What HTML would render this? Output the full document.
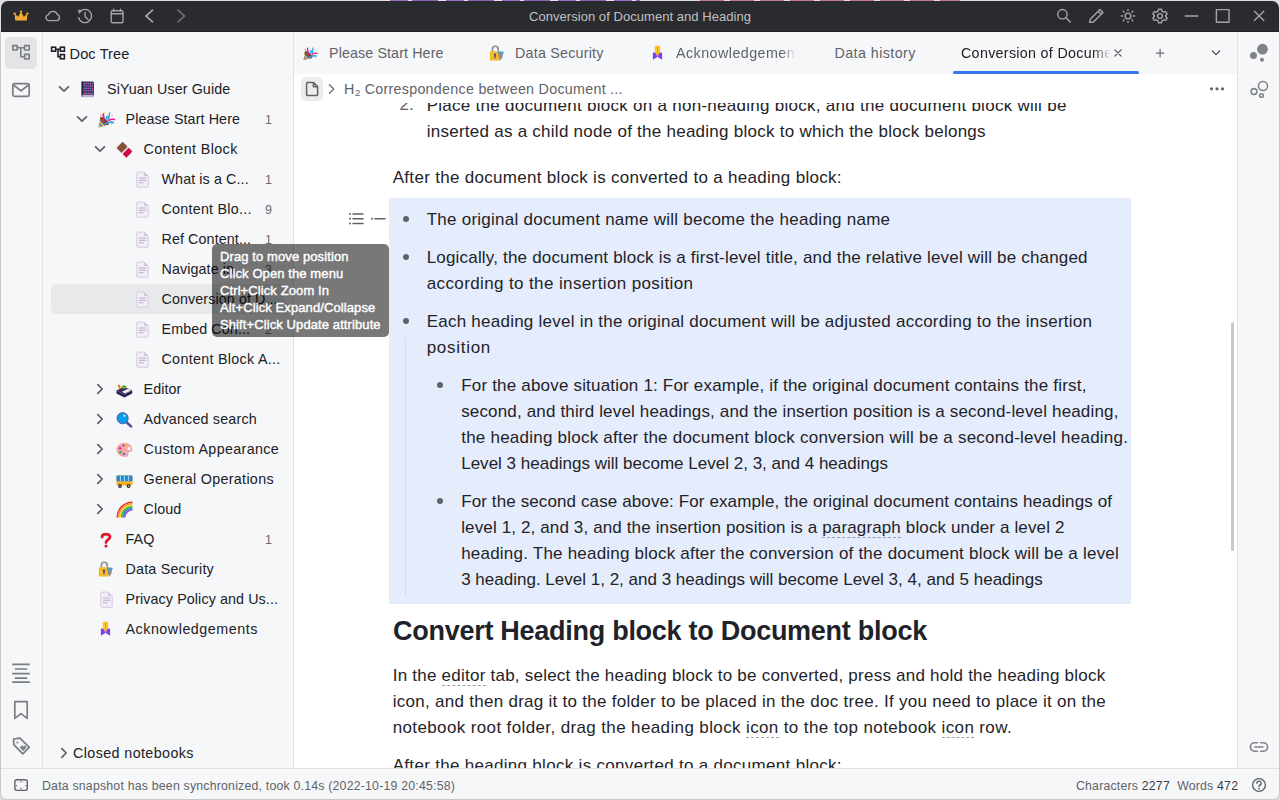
<!DOCTYPE html>
<html><head><meta charset="utf-8">
<style>
*{box-sizing:border-box;margin:0;padding:0}
html,body{width:1280px;height:800px;overflow:hidden;background:#dedede;font-family:"Liberation Sans",sans-serif;position:relative}
.a{position:absolute}
svg{position:absolute;overflow:visible}
#title{position:absolute;left:1px;top:1px;width:1278px;height:31px;background:#2a2b2f;border-radius:7px 7px 0 0;border-bottom:1px solid #1f2023}
#body{position:absolute;left:0;top:32px;width:1280px;height:768px;background:#c8c8c8;border-radius:0 0 7px 7px}
#dock{position:absolute;left:1px;top:32px;width:42px;height:736px;border-right:1px solid #e1e2e4;background:#f6f7f9}
#side{position:absolute;left:43px;top:32px;width:251px;height:736px;border-right:1px solid #e1e2e4;background:#f6f7f9}
#editor{position:absolute;left:294px;top:32px;width:943px;height:736px;background:#fff;overflow:hidden}
#tabs{position:absolute;left:294px;top:32px;width:943px;height:42px;background:#f6f7f9}
#rdock{position:absolute;left:1237px;top:32px;width:42px;height:736px;border-left:1px solid #e1e2e4;background:#f6f7f9}
#status{position:absolute;left:1px;top:768px;width:1278px;height:31px;border-top:1px solid #e1e2e4;background:#f6f7f9;border-radius:0 0 6px 6px}
.row{position:absolute;height:30px;line-height:30px;font-size:14.3px;color:#202124;white-space:nowrap;letter-spacing:.1px}
.cnt{position:absolute;height:30px;line-height:30px;font-size:12.5px;color:#6b6e73;white-space:nowrap;text-align:right;width:20px;left:252px}
.tab{position:absolute;top:32px;height:42px;line-height:42px;font-size:14.3px;color:#5f6368;white-space:nowrap;letter-spacing:.1px}
.p{position:absolute;white-space:pre;font-size:17px;color:#1f2329;line-height:26px}
.h{font-size:27px;font-weight:700;line-height:40px;color:#1f2329}
.u{border-bottom:1px dashed #9aa0a6}
.fade{-webkit-mask-image:linear-gradient(to right,#000 88%,transparent 100%)}
.st{stroke:#5f6368;fill:none;stroke-width:1.5;stroke-linecap:round;stroke-linejoin:round}
.tb{stroke:#a3a5a8;fill:none;stroke-width:1.4;stroke-linecap:round;stroke-linejoin:round}
.dk{stroke:#7a7d82;fill:none;stroke-width:1.7;stroke-linejoin:round}
.chev{stroke:#5f6368;fill:none;stroke-width:1.5;stroke-linecap:round;stroke-linejoin:round}
#tip{position:absolute;left:212px;top:244px;width:177px;height:93px;background:rgba(0,0,0,.53);border-radius:5px}
.tl{position:absolute;left:220px;font-size:13px;color:#fff;white-space:nowrap;line-height:17px;letter-spacing:.1px;-webkit-text-stroke:.4px #fff}
</style></head><body>
<div id="body"></div>
<div id="title"></div>
<div class="a" style="left:390px;top:0;width:250px;height:1px;background:repeating-linear-gradient(90deg,#9a6cc4 0 18px,#e4dcea 18px 22px,#8f62b8 22px 48px,#e6e0ea 48px 56px)"></div>
<div class="a" style="left:700px;top:0;width:260px;height:1px;background:repeating-linear-gradient(90deg,#c0779a 0 24px,#e8dde3 24px 30px)"></div>
<!-- titlebar icons -->
<svg width="1280" height="32" style="left:0;top:0">
  <path d="M15.2 20.6 L14.6 13.8 L18.2 16.8 L21 11.8 L23.8 16.8 L27.4 13.8 L26.8 20.6 Z" fill="#f3a930"/>
  <circle cx="14.6" cy="13.6" r="1.2" fill="#f3a930"/><circle cx="21" cy="11.6" r="1.2" fill="#f3a930"/><circle cx="27.4" cy="13.6" r="1.2" fill="#f3a930"/>
  <path class="tb" d="M49.5 20.6 H56.5 A3.2 3.2 0 0 0 57.3 14.4 A4.6 4.6 0 0 0 48.6 14.6 A3 3 0 0 0 49.5 20.6 Z"/>
  <path class="tb" d="M79.6 12.2 A6.6 6.6 0 1 1 78.6 17.6"/>
  <path d="M78 9.6 L82.4 10.6 L78.8 14 Z" fill="#a3a5a8"/>
  <path class="tb" d="M85 12.4 V16.4 L88 19.2"/>
  <rect class="tb" x="111.2" y="10.8" width="11.8" height="12" rx="1.4"/>
  <path class="tb" d="M111.2 13.8 H123 M113.6 9.2 V11 M120.6 9.2 V11"/>
  <path d="M153 9.6 L146 16 L153 22.4" stroke="#a3a5a8" stroke-width="1.7" fill="none"/>
  <path d="M177.5 9.6 L184.5 16 L177.5 22.4" stroke="#6a6c70" stroke-width="1.7" fill="none"/>
  <text x="640" y="20.5" text-anchor="middle" font-family="Liberation Sans" font-size="13" fill="#bfc0c3" letter-spacing=".05">Conversion of Document and Heading</text>
  <circle class="tb" cx="1062.4" cy="14.2" r="4.7"/><path class="tb" d="M1065.8 17.6 L1070.2 22"/>
  <path class="tb" d="M1089.6 22.4 L1090.4 19 L1100 9.4 L1103 12.4 L1093.4 22 Z M1098.2 11.2 L1101.2 14.2"/>
  <circle class="tb" cx="1128" cy="16" r="2.9"/>
  <path class="tb" d="M1128 9.4V10.6M1128 21.4V22.6M1121.4 16H1122.6M1133.4 16H1134.6M1123.3 11.3L1124.1 12.1M1131.9 19.9L1132.7 20.7M1123.3 20.7L1124.1 19.9M1131.9 12.1L1132.7 11.3"/>
  <path class="tb" d="M1158.6 9.2 H1161.4 L1162 11.2 L1163.8 12.2 L1165.8 11.6 L1167.2 14 L1165.6 15.4 V16.6 L1167.2 18 L1165.8 20.4 L1163.8 19.8 L1162 20.8 L1161.4 22.8 H1158.6 L1158 20.8 L1156.2 19.8 L1154.2 20.4 L1152.8 18 L1154.4 16.6 V15.4 L1152.8 14 L1154.2 11.6 L1156.2 12.2 L1158 11.2 Z"/>
  <circle class="tb" cx="1160" cy="16" r="2.4"/>
  <path class="tb" d="M1185.2 16 H1197.8"/>
  <rect class="tb" x="1216.4" y="9.6" width="12.6" height="12.6"/>
  <path class="tb" d="M1254.4 11.2 L1263.8 20.6 M1263.8 11.2 L1254.4 20.6"/>
</svg>

<div id="dock"></div>
<div class="a" style="left:5px;top:37px;width:32px;height:32px;background:#e3e4e6;border-radius:5px"></div>
<svg width="42" height="740" style="left:0;top:32px">
  <g class="dk" style="stroke-width:1.6">
    <rect x="12.8" y="13.6" width="4.4" height="4.4"/>
    <rect x="24.6" y="13.6" width="4.6" height="4.4"/>
    <rect x="24.6" y="22.4" width="4.6" height="4.6"/>
    <path d="M17.2 15.8 H24.6 M20.8 15.8 V24.7 H24.6"/>
  </g>
  <rect class="dk" x="12.8" y="51.6" width="16.4" height="12.8" rx="1.6"/>
  <path class="dk" d="M13.4 53 L21 58.8 L28.6 53"/>
  <path class="dk" d="M12.2 632.4 H29.8 M14.8 637 H27.2 M12.2 641.6 H29.8 M14.8 646.2 H27.2 M12.2 650.2 H29.8"/>
  <path class="dk" d="M14.8 669.6 H27.2 V686.4 L21 681.6 L14.8 686.4 Z"/>
  <path class="dk" d="M13.6 707 L13.8 712.6 L22.8 721.8 L29.2 715.4 L20 706.2 Z"/>
  <circle cx="17.4" cy="710.6" r="1" fill="#808388"/>
  <path d="M20.4 716.4 L23.2 719 L26 716.2 A1.5 1.5 0 0 0 23.2 714.4 A1.5 1.5 0 0 0 20.4 716.4 Z" fill="#808388"/>
</svg>

<div id="side"></div>
<svg style="left:50px;top:46px" width="16" height="14"><g stroke="#202124" stroke-width="1.6" fill="none"><rect x="1.6" y="1.2" width="4" height="4"/><rect x="10.4" y="1.2" width="4" height="4"/><rect x="10.4" y="8.6" width="4" height="4.2"/><path d="M5.6 3.2 H10.4 M8 3.2 V10.7 H10.4"/></g></svg>
<div class="row" style="left:69.5px;top:38.5px;font-size:14.6px">Doc Tree</div>
<div class="a" style="left:51px;top:284px;width:234px;height:30px;background:#e8e9eb;border-radius:5px"></div>
<svg style="left:58px;top:84.5px" width="12" height="8"><path d="M1.6 1.8 L6 6.2 L10.4 1.8" stroke="#5f6368" stroke-width="1.75" fill="none" stroke-linecap="round" stroke-linejoin="round"/></svg>
<svg style="left:81px;top:80.5px" width="14" height="17" viewBox="0 0 14 17" ><rect x="0.6" y="0.4" width="12.4" height="15.4" rx="1.2" fill="#4a3264"/><rect x="0.6" y="0.4" width="1.4" height="15.4" fill="#2c1d40"/><rect x="1.2" y="13.8" width="11.6" height="2.4" rx=".8" fill="#bfaed0"/><rect x="2.6" y="2.0" width="1.3" height="1.2" fill="#8e8aa0"/><rect x="4.6" y="2.0" width="1.3" height="1.2" fill="#e8489a"/><rect x="6.6" y="2.0" width="1.3" height="1.2" fill="#4f86f0"/><rect x="8.8" y="2.0" width="1.3" height="1.2" fill="#e8489a"/><rect x="10.8" y="2.0" width="1.3" height="1.2" fill="#4f86f0"/><rect x="2.6" y="4.3" width="1.3" height="1.2" fill="#4f86f0"/><rect x="4.6" y="4.3" width="1.3" height="1.2" fill="#e8489a"/><rect x="6.6" y="4.3" width="1.3" height="1.2" fill="#4f86f0"/><rect x="8.8" y="4.3" width="1.3" height="1.2" fill="#8e8aa0"/><rect x="10.8" y="4.3" width="1.3" height="1.2" fill="#e8489a"/><rect x="2.6" y="6.8" width="1.3" height="1.2" fill="#4f86f0"/><rect x="4.6" y="6.8" width="1.3" height="1.2" fill="#8e8aa0"/><rect x="6.6" y="6.8" width="1.3" height="1.2" fill="#e8489a"/><rect x="8.8" y="6.8" width="1.3" height="1.2" fill="#4f86f0"/><rect x="10.8" y="6.8" width="1.3" height="1.2" fill="#e8489a"/><rect x="2.6" y="9.0" width="1.3" height="1.2" fill="#e8489a"/><rect x="4.6" y="9.0" width="1.3" height="1.2" fill="#4f86f0"/><rect x="6.6" y="9.0" width="1.3" height="1.2" fill="#e8489a"/><rect x="8.8" y="9.0" width="1.3" height="1.2" fill="#4f86f0"/><rect x="10.8" y="9.0" width="1.3" height="1.2" fill="#8e8aa0"/><rect x="2.6" y="11.8" width="1.3" height="1.2" fill="#e8489a"/><rect x="4.6" y="11.8" width="1.3" height="1.2" fill="#4f86f0"/><rect x="6.6" y="11.8" width="1.3" height="1.2" fill="#8e8aa0"/><rect x="8.8" y="11.8" width="1.3" height="1.2" fill="#e8489a"/><rect x="10.8" y="11.8" width="1.3" height="1.2" fill="#4f86f0"/></svg>
<div class="row" style="left:107px;top:73.5px;letter-spacing:0.1px">SiYuan User Guide</div>
<svg style="left:76px;top:114.5px" width="12" height="8"><path d="M1.6 1.8 L6 6.2 L10.4 1.8" stroke="#5f6368" stroke-width="1.75" fill="none" stroke-linecap="round" stroke-linejoin="round"/></svg>
<svg style="left:97.5px;top:112px" width="17" height="16" viewBox="0 0 17 16" ><defs><clipPath id="cone"><path d="M0.6 15.4 L2.2 5.4 L10.8 12.6 Z"/></clipPath></defs><path d="M0.6 15.4 L2.2 5.4 L10.8 12.6 Z" fill="#f5bf2a"/><g clip-path="url(#cone)" stroke="#4a6ee8" stroke-width="1.3"><path d="M-1 9.4 L6 16.4 M-1 12.6 L4 17.6 M0 6.4 L8 14.4"/></g><ellipse cx="6.4" cy="9" rx="5.6" ry="2.3" transform="rotate(42 6.4 9)" fill="#7a4a30"/><path d="M5.6 10.2 C6 7 6 4.6 5.2 2" stroke="#e8198a" stroke-width="1.7" fill="none" stroke-linecap="round"/><circle cx="9.6" cy="5.8" r="1.3" stroke="#1aa2e6" stroke-width="1.3" fill="none"/><path d="M10.9 6 L11.6 1" stroke="#1aa2e6" stroke-width="1.3" stroke-linecap="round"/><path d="M10.6 8.4 C12.4 7.2 14 6.8 16.4 7.4" stroke="#e8198a" stroke-width="1.5" fill="none" stroke-linecap="round"/><path d="M7.4 12.4 C9.4 10 12 9.6 15.4 10.6" stroke="#1aa2e6" stroke-width="1.7" fill="none" stroke-linecap="round"/><circle cx="6.2" cy="0.8" r=".8" fill="#f5b02a"/><circle cx="2.8" cy="3.2" r=".8" fill="#f06ab0"/><circle cx="14" cy="3.4" r=".8" fill="#f5a0c8"/><circle cx="13.4" cy="12.4" r=".7" fill="#f5c070"/></svg>
<div class="row" style="left:125.5px;top:103.5px;letter-spacing:0.1px">Please Start Here</div>
<div class="cnt" style="top:104.5px">1</div>
<svg style="left:94px;top:144.5px" width="12" height="8"><path d="M1.6 1.8 L6 6.2 L10.4 1.8" stroke="#5f6368" stroke-width="1.75" fill="none" stroke-linecap="round" stroke-linejoin="round"/></svg>
<svg style="left:115.5px;top:140.5px" width="17" height="17" viewBox="0 0 17 17" ><g transform="rotate(-45 8.5 8.7)"><rect x="4.1" y="1.7" width="8.8" height="7.2" rx=".8" fill="#8d553e"/><path d="M6.3 2 V8.6 M8.5 2 V8.6 M10.7 2 V8.6 M4.4 5.3 H12.6" stroke="#7a4532" stroke-width=".5"/><rect x="4.1" y="8.9" width="8.8" height="1.4" fill="#dcdcdc"/><rect x="4.1" y="10.3" width="8.8" height="5.4" rx=".8" fill="#d20c42"/></g></svg>
<div class="row" style="left:143.5px;top:133.5px;letter-spacing:0.4px">Content Block</div>
<svg style="left:134.5px;top:170.5px" width="15" height="17" viewBox="0 0 15 17" ><path d="M1.8 1.9 Q1.8 1.1 2.6 1.1 H9.2 L13.2 5.1 V15.4 Q13.2 16.2 12.4 16.2 H2.6 Q1.8 16.2 1.8 15.4 Z" fill="#f2edf8" stroke="#d3cadf" stroke-width="1"/><path d="M9.2 1.2 V5.1 H13.1 Z" fill="#cdc3da"/><path d="M3.9 7 H11.2 M3.9 9.3 H11.2 M3.9 11.8 H8.6" stroke="#b9afc6" stroke-width="1.1"/></svg>
<div class="row" style="left:161.5px;top:163.5px;letter-spacing:0.1px">What is a C...</div>
<div class="cnt" style="top:164.5px">1</div>
<svg style="left:134.5px;top:200.5px" width="15" height="17" viewBox="0 0 15 17" ><path d="M1.8 1.9 Q1.8 1.1 2.6 1.1 H9.2 L13.2 5.1 V15.4 Q13.2 16.2 12.4 16.2 H2.6 Q1.8 16.2 1.8 15.4 Z" fill="#f2edf8" stroke="#d3cadf" stroke-width="1"/><path d="M9.2 1.2 V5.1 H13.1 Z" fill="#cdc3da"/><path d="M3.9 7 H11.2 M3.9 9.3 H11.2 M3.9 11.8 H8.6" stroke="#b9afc6" stroke-width="1.1"/></svg>
<div class="row" style="left:161.5px;top:193.5px;letter-spacing:0.25px">Content Blo...</div>
<div class="cnt" style="top:194.5px">9</div>
<svg style="left:134.5px;top:230.5px" width="15" height="17" viewBox="0 0 15 17" ><path d="M1.8 1.9 Q1.8 1.1 2.6 1.1 H9.2 L13.2 5.1 V15.4 Q13.2 16.2 12.4 16.2 H2.6 Q1.8 16.2 1.8 15.4 Z" fill="#f2edf8" stroke="#d3cadf" stroke-width="1"/><path d="M9.2 1.2 V5.1 H13.1 Z" fill="#cdc3da"/><path d="M3.9 7 H11.2 M3.9 9.3 H11.2 M3.9 11.8 H8.6" stroke="#b9afc6" stroke-width="1.1"/></svg>
<div class="row" style="left:161.5px;top:223.5px;letter-spacing:0.1px">Ref Content...</div>
<div class="cnt" style="top:224.5px">1</div>
<svg style="left:134.5px;top:260.5px" width="15" height="17" viewBox="0 0 15 17" ><path d="M1.8 1.9 Q1.8 1.1 2.6 1.1 H9.2 L13.2 5.1 V15.4 Q13.2 16.2 12.4 16.2 H2.6 Q1.8 16.2 1.8 15.4 Z" fill="#f2edf8" stroke="#d3cadf" stroke-width="1"/><path d="M9.2 1.2 V5.1 H13.1 Z" fill="#cdc3da"/><path d="M3.9 7 H11.2 M3.9 9.3 H11.2 M3.9 11.8 H8.6" stroke="#b9afc6" stroke-width="1.1"/></svg>
<div class="row" style="left:161.5px;top:253.5px;letter-spacing:0.1px">Navigate in...</div>
<div class="cnt" style="top:254.5px">3</div>
<svg style="left:134.5px;top:290.5px" width="15" height="17" viewBox="0 0 15 17" ><path d="M1.8 1.9 Q1.8 1.1 2.6 1.1 H9.2 L13.2 5.1 V15.4 Q13.2 16.2 12.4 16.2 H2.6 Q1.8 16.2 1.8 15.4 Z" fill="#f2edf8" stroke="#d3cadf" stroke-width="1"/><path d="M9.2 1.2 V5.1 H13.1 Z" fill="#cdc3da"/><path d="M3.9 7 H11.2 M3.9 9.3 H11.2 M3.9 11.8 H8.6" stroke="#b9afc6" stroke-width="1.1"/></svg>
<div class="row" style="left:161.5px;top:283.5px;letter-spacing:0.1px">Conversion of D...</div>
<svg style="left:134.5px;top:320.5px" width="15" height="17" viewBox="0 0 15 17" ><path d="M1.8 1.9 Q1.8 1.1 2.6 1.1 H9.2 L13.2 5.1 V15.4 Q13.2 16.2 12.4 16.2 H2.6 Q1.8 16.2 1.8 15.4 Z" fill="#f2edf8" stroke="#d3cadf" stroke-width="1"/><path d="M9.2 1.2 V5.1 H13.1 Z" fill="#cdc3da"/><path d="M3.9 7 H11.2 M3.9 9.3 H11.2 M3.9 11.8 H8.6" stroke="#b9afc6" stroke-width="1.1"/></svg>
<div class="row" style="left:161.5px;top:313.5px;letter-spacing:0.1px">Embed Con...</div>
<div class="cnt" style="top:314.5px">2</div>
<svg style="left:134.5px;top:350.5px" width="15" height="17" viewBox="0 0 15 17" ><path d="M1.8 1.9 Q1.8 1.1 2.6 1.1 H9.2 L13.2 5.1 V15.4 Q13.2 16.2 12.4 16.2 H2.6 Q1.8 16.2 1.8 15.4 Z" fill="#f2edf8" stroke="#d3cadf" stroke-width="1"/><path d="M9.2 1.2 V5.1 H13.1 Z" fill="#cdc3da"/><path d="M3.9 7 H11.2 M3.9 9.3 H11.2 M3.9 11.8 H8.6" stroke="#b9afc6" stroke-width="1.1"/></svg>
<div class="row" style="left:161.5px;top:343.5px;letter-spacing:0.3px">Content Block A...</div>
<svg style="left:96px;top:382.5px" width="8" height="12"><path d="M1.8 1.6 L6.2 6 L1.8 10.4" stroke="#5f6368" stroke-width="1.75" fill="none" stroke-linecap="round" stroke-linejoin="round"/></svg>
<svg style="left:115.5px;top:384px" width="17" height="14" viewBox="0 0 17 14" ><path d="M0.5 6.6 L8.4 10.6 L16.2 6.6 V9.4 L8.4 13.4 L0.5 9.4 Z" fill="#2c1f4a"/><path d="M0.5 6.6 L8 2.8 L16.2 6.6 L8.4 10.6 Z" fill="#3a2a60"/><path d="M6 7.8 L12 4.8 L15 6.4 L9 9.4 Z" fill="#f2f0f6"/><ellipse cx="8" cy="3" rx="2.6" ry="1.8" fill="#5cb030"/><path d="M1.4 1.2 L3.8 5.6 L5 4.6 L3.6 0.6 Z" fill="#f4731f"/></svg>
<div class="row" style="left:143.5px;top:373.5px;letter-spacing:0.1px">Editor</div>
<svg style="left:96px;top:412.5px" width="8" height="12"><path d="M1.8 1.6 L6.2 6 L1.8 10.4" stroke="#5f6368" stroke-width="1.75" fill="none" stroke-linecap="round" stroke-linejoin="round"/></svg>
<svg style="left:115.5px;top:411px" width="17" height="17" viewBox="0 0 17 17" ><path d="M10.2 11 L15 15.4" stroke="#5a4a9a" stroke-width="2.6" stroke-linecap="round"/><circle cx="6.6" cy="7.2" r="5.6" fill="#0b9ee8" stroke="#5a4a9a" stroke-width=".8"/><circle cx="8.4" cy="4.8" r="1" fill="#fff"/></svg>
<div class="row" style="left:143.5px;top:403.5px;letter-spacing:0.2px">Advanced search</div>
<svg style="left:96px;top:442.5px" width="8" height="12"><path d="M1.8 1.6 L6.2 6 L1.8 10.4" stroke="#5f6368" stroke-width="1.75" fill="none" stroke-linecap="round" stroke-linejoin="round"/></svg>
<svg style="left:115.5px;top:441.5px" width="17" height="16" viewBox="0 0 17 16" ><path d="M8.4 0.8 C13.6 0.8 16.4 4 16.4 7.4 C16.4 10 13.4 9.4 12.6 10.6 C11.8 12 13.6 14.8 9.4 15 C4.4 15.2 0.6 12 0.6 7.6 C0.6 3.6 4 0.8 8.4 0.8 Z" fill="#f4a7a5"/><circle cx="13" cy="6.6" r="1.6" fill="#fff"/><circle cx="4" cy="6.2" r="1.2" fill="#e8188a"/><circle cx="7.4" cy="3.6" r="1.1" fill="#7a40d0"/><circle cx="4.4" cy="10.2" r="1.2" fill="#22b04a"/><circle cx="8" cy="12" r="1.1" fill="#2a5ae0"/><circle cx="10.8" cy="3.4" r="1" fill="#f0c020"/></svg>
<div class="row" style="left:143.5px;top:433.5px;letter-spacing:0.36px">Custom Appearance</div>
<svg style="left:96px;top:472.5px" width="8" height="12"><path d="M1.8 1.6 L6.2 6 L1.8 10.4" stroke="#5f6368" stroke-width="1.75" fill="none" stroke-linecap="round" stroke-linejoin="round"/></svg>
<svg style="left:115.5px;top:474.5px" width="17" height="14" viewBox="0 0 17 14" ><rect x="0.5" y="0.6" width="16" height="10" rx="1.2" fill="#f7b228"/><rect x="0.5" y="0.6" width="16" height="5.6" rx="1" fill="#1a8bd6"/><path d="M4.4 1 V6 M8.4 1 V6 M12.4 1 V6" stroke="#e6f2fa" stroke-width=".8"/><circle cx="4" cy="11" r="1.9" fill="#2a2a2a"/><circle cx="12.6" cy="11" r="1.9" fill="#2a2a2a"/><circle cx="4" cy="11" r=".7" fill="#ddd"/><circle cx="12.6" cy="11" r=".7" fill="#ddd"/></svg>
<div class="row" style="left:143.5px;top:463.5px;letter-spacing:0.31px">General Operations</div>
<svg style="left:96px;top:502.5px" width="8" height="12"><path d="M1.8 1.6 L6.2 6 L1.8 10.4" stroke="#5f6368" stroke-width="1.75" fill="none" stroke-linecap="round" stroke-linejoin="round"/></svg>
<svg style="left:115.5px;top:500.5px" width="17" height="17" viewBox="0 0 17 17" ><path d="M1.2 16.4 A15.2 15.2 0 0 1 16.4 1.2" stroke="#ef2b2b" stroke-width="1.6" fill="none"/><path d="M2.7 16.4 A13.7 13.7 0 0 1 16.4 2.7" stroke="#f6962b" stroke-width="1.6" fill="none"/><path d="M4.2 16.4 A12.2 12.2 0 0 1 16.4 4.2" stroke="#f5d32c" stroke-width="1.6" fill="none"/><path d="M5.7 16.4 A10.7 10.7 0 0 1 16.4 5.7" stroke="#43b547" stroke-width="1.6" fill="none"/><path d="M7.2 16.4 A9.2 9.2 0 0 1 16.4 7.2" stroke="#2e86de" stroke-width="1.6" fill="none"/><path d="M8.7 16.4 A7.699999999999999 7.699999999999999 0 0 1 16.4 8.7" stroke="#7b4fc8" stroke-width="1.6" fill="none"/></svg>
<div class="row" style="left:143.5px;top:493.5px;letter-spacing:0.1px">Cloud</div>
<svg style="left:100px;top:531.5px" width="12" height="16" viewBox="0 0 12 16" ><path d="M2 5 C2 1.2 10 1 10 5 C10 7.8 6 7.6 6 10.6" stroke="#e0182d" stroke-width="2.8" fill="none" stroke-linecap="round"/><circle cx="6" cy="14" r="1.6" fill="#e0182d"/></svg>
<div class="row" style="left:125.5px;top:523.5px;letter-spacing:0.1px">FAQ</div>
<div class="cnt" style="top:524.5px">1</div>
<svg style="left:97.5px;top:561px" width="17" height="17" viewBox="0 0 17 17" ><path d="M3.4 6.6 V4.2 A2.9 2.9 0 0 1 9.2 4.2 V6.6" stroke="#8e8e93" stroke-width="1.6" fill="none"/><rect x="0.8" y="6.2" width="10.6" height="9.2" rx="1" fill="#f6b82c"/><circle cx="6" cy="9.4" r="1" fill="#3a3a7a"/><path d="M6 9.6 V12.8" stroke="#3a3a7a" stroke-width="1.2" stroke-linecap="round"/><path d="M9 7.6 H14.4 L13.4 12.6 L11.4 15.4 L10 12.6 Z" fill="#8a8f96"/><rect x="8.8" y="6.6" width="5.8" height="1.4" fill="#2aa6ea"/></svg>
<div class="row" style="left:125.5px;top:553.5px;letter-spacing:0.2px">Data Security</div>
<svg style="left:98.5px;top:590.5px" width="15" height="17" viewBox="0 0 15 17" ><path d="M1.8 1.9 Q1.8 1.1 2.6 1.1 H9.2 L13.2 5.1 V15.4 Q13.2 16.2 12.4 16.2 H2.6 Q1.8 16.2 1.8 15.4 Z" fill="#f2edf8" stroke="#d3cadf" stroke-width="1"/><path d="M9.2 1.2 V5.1 H13.1 Z" fill="#cdc3da"/><path d="M3.9 7 H11.2 M3.9 9.3 H11.2 M3.9 11.8 H8.6" stroke="#b9afc6" stroke-width="1.1"/></svg>
<div class="row" style="left:125.5px;top:583.5px;letter-spacing:0.1px">Privacy Policy and Us...</div>
<svg style="left:100.2px;top:620.5px" width="12" height="17" viewBox="0 0 12 17" ><path d="M2.8 2.2 Q2.8 0.8 4.2 0.8 H6.8 Q8.2 0.8 8.2 2.2 V8.4 L5.5 11.4 L2.8 8.4 Z" fill="#fbc52a"/><path d="M5.5 1.4 V10.8" stroke="#e39a18" stroke-width=".7"/><path d="M0.9 7.8 L3 7.6 L5.5 11.4 L8 7.6 L10.1 7.8 V14.8 L5.5 11.8 L0.9 14.8 Z" fill="#7a3cf2"/></svg>
<div class="row" style="left:125.5px;top:613.5px;letter-spacing:0.52px">Acknowledgements</div>
<svg style="left:59.5px;top:747px" width="8" height="12"><path d="M1.8 1.6 L6.2 6 L1.8 10.4" stroke="#5f6368" stroke-width="1.75" fill="none" stroke-linecap="round" stroke-linejoin="round"/></svg>
<div class="row" style="left:73px;top:737.5px;letter-spacing:.4px">Closed notebooks</div>
<div id="editor"></div>
<div class="a" style="left:389px;top:198px;width:742px;height:406px;background:#e5ecfb"></div>
<div class="a" style="left:405px;top:338px;width:1px;height:258px;background:#d9dbe0"></div>
<div class="a" style="left:403px;top:216px;width:6px;height:6px;border-radius:3px;background:#5f6368"></div>
<div class="a" style="left:403px;top:254px;width:6px;height:6px;border-radius:3px;background:#5f6368"></div>
<div class="a" style="left:403px;top:318px;width:6px;height:6px;border-radius:3px;background:#5f6368"></div>
<div class="a" style="left:437px;top:382px;width:6px;height:6px;border-radius:3px;background:#5f6368"></div>
<div class="a" style="left:437px;top:498px;width:6px;height:6px;border-radius:3px;background:#5f6368"></div>
<div class="p" style="left:399.5px;top:92px;color:#5f6368">2.</div>
<svg style="left:346px;top:210px" width="42" height="18"><path d="M7 4 H17 M7 8.8 H17 M7 13.6 H17 M29 8.8 H39" stroke="#5f6368" stroke-width="1.5" stroke-linecap="round"/><circle cx="4" cy="4" r="1" fill="#5f6368"/><circle cx="4" cy="8.8" r="1" fill="#5f6368"/><circle cx="4" cy="13.6" r="1" fill="#5f6368"/><circle cx="26" cy="8.8" r="1" fill="#5f6368"/></svg>
<div class="a" style="left:1231px;top:322px;width:2.6px;height:229px;background:#c9c9c9;border-radius:2px"></div>
<div class="p" style="left:426.7px;top:93px;letter-spacing:0.277px">Place the document block on a non-heading block, and the document block will be</div>
<div class="p" style="left:426.7px;top:119px;letter-spacing:0.258px">inserted as a child node of the heading block to which the block belongs</div>
<div class="p" style="left:392.7px;top:165px;letter-spacing:0.304px">After the document block is converted to a heading block:</div>
<div class="p" style="left:426.7px;top:207px;letter-spacing:0.251px">The original document name will become the heading name</div>
<div class="p" style="left:426.7px;top:245px;letter-spacing:0.184px">Logically, the document block is a first-level title, and the relative level will be changed</div>
<div class="p" style="left:426.7px;top:271px;letter-spacing:0.383px">according to the insertion position</div>
<div class="p" style="left:426.7px;top:309px;letter-spacing:0.241px">Each heading level in the original document will be adjusted according to the insertion</div>
<div class="p" style="left:426.7px;top:335px;letter-spacing:0.713px">position</div>
<div class="p" style="left:461.2px;top:373px;letter-spacing:0.189px">For the above situation 1: For example, if the original document contains the first,</div>
<div class="p" style="left:461.2px;top:399px;letter-spacing:0.158px">second, and third level headings, and the insertion position is a second-level heading,</div>
<div class="p" style="left:461.2px;top:425px;letter-spacing:0.231px">the heading block after the document block conversion will be a second-level heading.</div>
<div class="p" style="left:461.2px;top:451px;letter-spacing:0.010px">Level 3 headings will become Level 2, 3, and 4 headings</div>
<div class="p" style="left:461.2px;top:489px;letter-spacing:0.113px">For the second case above: For example, the original document contains headings of</div>
<div class="p" style="left:461.2px;top:515px;letter-spacing:0.131px">level 1, 2, and 3, and the insertion position is a <span class="u">paragraph</span> block under a level 2</div>
<div class="p" style="left:461.2px;top:541px;letter-spacing:0.216px">heading. The heading block after the conversion of the document block will be a level</div>
<div class="p" style="left:461.2px;top:567px;letter-spacing:0.004px">3 heading. Level 1, 2, and 3 headings will become Level 3, 4, and 5 headings</div>
<div class="p" style="left:392.7px;top:663px;letter-spacing:0.235px">In the <span class="u">editor</span> tab, select the heading block to be converted, press and hold the heading block</div>
<div class="p" style="left:392.7px;top:689px;letter-spacing:0.279px">icon, and then drag it to the folder to be placed in the doc tree. If you need to place it on the</div>
<div class="p" style="left:392.7px;top:715px;letter-spacing:0.374px">notebook root folder, drag the heading block <span class="u">icon</span> to the top notebook <span class="u">icon</span> row.</div>
<div class="p" style="left:392.7px;top:753px;letter-spacing:0.304px">After the heading block is converted to a document block:</div>
<div class="p h" style="left:393px;top:611px;letter-spacing:-0.273px">Convert Heading block to Document block</div>
<div class="a" style="left:294px;top:74px;width:943px;height:29px;background:#fff"></div>
<div class="a" style="left:301px;top:77px;width:22px;height:23.5px;background:#ececed;border-radius:5px"></div>
<svg style="left:304px;top:81px" width="16" height="16"><path d="M2.6 2.4 Q2.6 1.6 3.4 1.6 H9.6 L13.6 5.6 V13.8 Q13.6 14.6 12.8 14.6 H3.4 Q2.6 14.6 2.6 13.8 Z M9.4 1.8 V5.8 H13.4" stroke="#5f6368" stroke-width="1.5" fill="none" stroke-linejoin="round"/></svg>
<svg style="left:327px;top:83px" width="10" height="12"><path d="M2.4 1.8 L6.8 6 L2.4 10.2" stroke="#6b6e73" stroke-width="1.3" fill="none" stroke-linecap="round" stroke-linejoin="round"/></svg>
<div class="tab" style="left:344px;top:75px;height:29px;line-height:29px;letter-spacing:.27px">H<span style="font-size:9.5px;position:relative;top:1.5px;letter-spacing:0;padding-left:.5px">2</span> Correspondence between Document ...</div>
<svg style="left:1208px;top:85px" width="18" height="8"><circle cx="3.5" cy="3.8" r="1.6" fill="#5f6368"/><circle cx="9" cy="3.8" r="1.6" fill="#5f6368"/><circle cx="14.5" cy="3.8" r="1.6" fill="#5f6368"/></svg>
<div id="tabs"></div>
<svg style="transform:scale(.86);transform-origin:0 0;left:303px;top:46.5px" width="17" height="16" viewBox="0 0 17 16" ><defs><clipPath id="cone"><path d="M0.6 15.4 L2.2 5.4 L10.8 12.6 Z"/></clipPath></defs><path d="M0.6 15.4 L2.2 5.4 L10.8 12.6 Z" fill="#f5bf2a"/><g clip-path="url(#cone)" stroke="#4a6ee8" stroke-width="1.3"><path d="M-1 9.4 L6 16.4 M-1 12.6 L4 17.6 M0 6.4 L8 14.4"/></g><ellipse cx="6.4" cy="9" rx="5.6" ry="2.3" transform="rotate(42 6.4 9)" fill="#7a4a30"/><path d="M5.6 10.2 C6 7 6 4.6 5.2 2" stroke="#e8198a" stroke-width="1.7" fill="none" stroke-linecap="round"/><circle cx="9.6" cy="5.8" r="1.3" stroke="#1aa2e6" stroke-width="1.3" fill="none"/><path d="M10.9 6 L11.6 1" stroke="#1aa2e6" stroke-width="1.3" stroke-linecap="round"/><path d="M10.6 8.4 C12.4 7.2 14 6.8 16.4 7.4" stroke="#e8198a" stroke-width="1.5" fill="none" stroke-linecap="round"/><path d="M7.4 12.4 C9.4 10 12 9.6 15.4 10.6" stroke="#1aa2e6" stroke-width="1.7" fill="none" stroke-linecap="round"/><circle cx="6.2" cy="0.8" r=".8" fill="#f5b02a"/><circle cx="2.8" cy="3.2" r=".8" fill="#f06ab0"/><circle cx="14" cy="3.4" r=".8" fill="#f5a0c8"/><circle cx="13.4" cy="12.4" r=".7" fill="#f5c070"/></svg>
<div class="tab" style="left:329px">Please Start Here</div>
<svg style="left:489px;top:45px" width="17" height="17" viewBox="0 0 17 17" ><path d="M3.4 6.6 V4.2 A2.9 2.9 0 0 1 9.2 4.2 V6.6" stroke="#8e8e93" stroke-width="1.6" fill="none"/><rect x="0.8" y="6.2" width="10.6" height="9.2" rx="1" fill="#f6b82c"/><circle cx="6" cy="9.4" r="1" fill="#3a3a7a"/><path d="M6 9.6 V12.8" stroke="#3a3a7a" stroke-width="1.2" stroke-linecap="round"/><path d="M9 7.6 H14.4 L13.4 12.6 L11.4 15.4 L10 12.6 Z" fill="#8a8f96"/><rect x="8.8" y="6.6" width="5.8" height="1.4" fill="#2aa6ea"/></svg>
<div class="tab" style="left:515px;letter-spacing:.22px">Data Security</div>
<svg style="left:652px;top:45px" width="12" height="17" viewBox="0 0 12 17" ><path d="M2.8 2.2 Q2.8 0.8 4.2 0.8 H6.8 Q8.2 0.8 8.2 2.2 V8.4 L5.5 11.4 L2.8 8.4 Z" fill="#fbc52a"/><path d="M5.5 1.4 V10.8" stroke="#e39a18" stroke-width=".7"/><path d="M0.9 7.8 L3 7.6 L5.5 11.4 L8 7.6 L10.1 7.8 V14.8 L5.5 11.8 L0.9 14.8 Z" fill="#7a3cf2"/></svg>
<div class="tab fade" style="left:676px;width:120px;overflow:hidden;letter-spacing:.45px">Acknowledgements</div>
<div class="tab" style="left:834.5px;letter-spacing:.42px">Data history</div>
<div class="tab fade" style="left:961px;width:150px;overflow:hidden;color:#202124;letter-spacing:.3px">Conversion of Document and Heading</div>
<svg style="left:1112px;top:47px" width="12" height="12"><path d="M2.9 2.9 L9.1 9.1 M9.1 2.9 L2.9 9.1" stroke="#4d5156" stroke-width="1.25" stroke-linecap="round"/></svg>
<svg style="left:1154px;top:47px" width="12" height="12"><path d="M6.1 2.4 V9.8 M2.4 6.1 H9.8" stroke="#6b6e73" stroke-width="1.2" stroke-linecap="round"/></svg>
<svg style="left:1210px;top:48px" width="12" height="10"><path d="M2.4 3 L6 6.6 L9.6 3" stroke="#4d5156" stroke-width="1.3" fill="none" stroke-linecap="round" stroke-linejoin="round"/></svg>
<div class="a" style="left:953px;top:70.5px;width:186px;height:3px;background:#3575f0;border-radius:2px"></div>
<div id="rdock"></div>
<svg style="left:1238px;top:32px" width="42" height="740"><g fill="#808388"><circle cx="24.5" cy="17.2" r="5.4"/><circle cx="15.5" cy="23.5" r="3.5"/><circle cx="24" cy="27.8" r="2"/></g><g fill="none" stroke="#808388" stroke-width="1.55"><circle cx="25" cy="54" r="4.5"/><circle cx="16" cy="59.5" r="2.9"/><circle cx="23.5" cy="63.5" r="1.8"/></g><path d="M19.4 710.8 H16.6 A4.2 4.2 0 0 0 16.6 719.2 H19.4 M22.6 710.8 H25.4 A4.2 4.2 0 0 1 25.4 719.2 H22.6 M17 715 H25" stroke="#808388" stroke-width="1.6" fill="none" stroke-linecap="round"/></svg>
<div id="status"></div>
<svg style="left:12px;top:777px" width="18" height="16"><rect x="2.9" y="2.8" width="12.4" height="10.6" rx="1.8" stroke="#5f6368" stroke-width="1.4" fill="none"/><path d="M9.1 3.4 V5.6 M9.1 10.6 V12.8 M4.5 8.1 V9.3 M13.7 8.1 V9.3" stroke="#7d8085" stroke-width="1.2"/><path d="M5 5.4 H13.2 M5 10.8 H13.2" stroke="#c9cbce" stroke-width=".7" stroke-dasharray="1 1"/></svg>
<div class="a" style="left:42px;top:778px;font-size:12.3px;color:#5f6368;white-space:nowrap;line-height:16px;letter-spacing:.21px">Data snapshot has been synchronized, took 0.14s (2022-10-19 20:45:58)</div>
<div class="a" style="left:1076px;top:778px;font-size:12.3px;color:#5f6368;white-space:pre;line-height:16px;letter-spacing:.2px">Characters <span style="color:#3c4043">2277</span>  Words <span style="color:#3c4043">472</span></div>
<svg style="left:1250px;top:776px" width="18" height="18"><circle cx="9" cy="9" r="6.4" stroke="#5f6368" stroke-width="1.4" fill="none"/><path d="M6.9 7.2 A2.1 2.1 0 1 1 9.4 9.3 Q9 9.6 9 10.6" stroke="#5f6368" stroke-width="1.4" fill="none" stroke-linecap="round"/><circle cx="9" cy="12.6" r=".9" fill="#5f6368"/></svg>
<div id="tip"></div>
<div class="tl" style="top:247.5px">Drag to move position</div>
<div class="tl" style="top:264.5px">Click Open the menu</div>
<div class="tl" style="top:281.5px">Ctrl+Click Zoom In</div>
<div class="tl" style="top:298.5px">Alt+Click Expand/Collapse</div>
<div class="tl" style="top:315.5px">Shift+Click Update attribute</div>

</body></html>
